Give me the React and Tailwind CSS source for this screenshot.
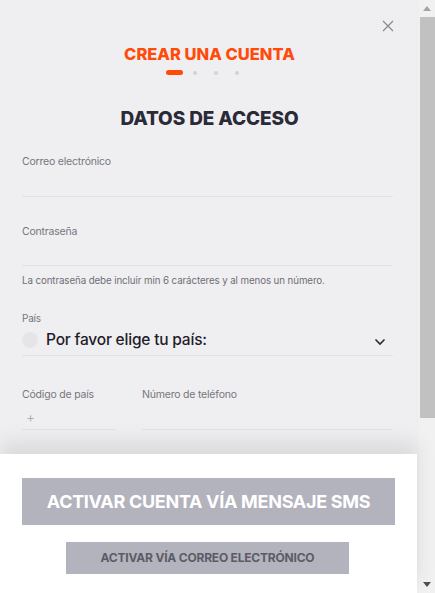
import React from "react";

const font = { fontFamily: "Inter, 'Liberation Sans', Arial, sans-serif" };

function Scrollbar() {
  return (
    <div className="w-[16px] h-[593px] bg-[#f1f1f1] flex flex-col items-center">
      <div className="h-[17px] w-full flex items-center justify-center">
        <svg width="8" height="5" viewBox="0 0 8 5">
          <path d="M0 5L4 0L8 5Z" fill="#a3a3a3" />
        </svg>
      </div>
      <div className="h-[401px] w-[15px] ml-[1px] bg-[#c1c1c1]" />
      <div className="flex-1" />
      <div className="h-[17px] w-full flex items-center justify-center">
        <svg width="8" height="5" viewBox="0 0 8 5">
          <path d="M0 0L8 0L4 5Z" fill="#505050" />
        </svg>
      </div>
    </div>
  );
}

export default function App() {
  return (
    <div className="h-[593px] w-[435px] flex bg-[#efeff1] overflow-hidden" style={font}>
      <div className="w-[419px] h-[593px] flex flex-col relative">
        <div className="relative px-[22px] pt-[45px] flex-1">
          <button className="absolute right-[25px] top-[20px] text-[#8a8a90]">
            <svg width="12" height="12" viewBox="0 0 12 12" fill="none" stroke="currentColor" strokeWidth="1.3">
              <path d="M1 1L11 11M11 1L1 11" />
            </svg>
          </button>
          <h1 className="text-center text-[16.5px] leading-[18px] font-extrabold tracking-[0px] text-[#ff4a0a]">
            CREAR UNA CUENTA
          </h1>
          <div className="flex items-center mt-[7px] ml-[144px]">
            <div className="h-[5px] w-[17px] rounded-full bg-[#ff4a0a]" />
            <div className="ml-[10px] h-[4px] w-[4px] rounded-full bg-[#d2d2d6]" />
            <div className="ml-[17px] h-[4px] w-[4px] rounded-full bg-[#d2d2d6]" />
            <div className="ml-[17px] h-[4px] w-[4px] rounded-full bg-[#d2d2d6]" />
          </div>
          <h2 className="mt-[33px] text-center text-[19px] leading-[22px] font-extrabold tracking-[-0.1px] text-[#2b2a38]">
            DATOS DE ACCESO
          </h2>

          <div className="mt-[25px] w-[371px]">
            <div className="text-[10.5px] leading-[14px] text-[#76767c] tracking-[-0.2px]">Correo electrónico</div>
            <div className="h-[28px] border-b border-[#e2e2e6]" />
          </div>

          <div className="mt-[28px] w-[371px]">
            <div className="text-[10.5px] leading-[14px] text-[#76767c] tracking-[-0.2px]">Contraseña</div>
            <div className="h-[27px] border-b border-[#e2e2e6]" />
            <div className="mt-[8px] text-[9.75px] leading-[14px] text-[#6e6e74] tracking-[-0.1px]">
              La contraseña debe incluir min 6 carácteres y al menos un número.
            </div>
          </div>

          <div className="mt-[24px] w-[371px]">
            <div className="text-[10px] leading-[13px] text-[#76767c] tracking-[-0.2px]">País</div>
            <div className="flex items-center h-[31px] border-b border-[#e2e2e6]">
              <div className="h-[16px] w-[16px] rounded-full bg-[#e5e5e8]" />
              <span className="ml-[8px] text-[15.5px] leading-[20px] font-medium text-[#1f1d2a] tracking-[-0.2px]">
                Por favor elige tu país:
              </span>
              <svg className="ml-auto mr-[7px] mt-[4px]" width="12" height="8" viewBox="0 0 12 8" fill="none" stroke="#2b2a38" strokeWidth="1.6">
                <path d="M1.5 1.5L6 6L10.5 1.5" />
              </svg>
            </div>
          </div>

          <div className="mt-[32px] flex w-[371px]">
            <div className="w-[93px]">
              <div className="text-[10.5px] leading-[14px] text-[#76767c] tracking-[-0.2px]">Código de país</div>
              <div className="h-[28px] border-b border-[#e2e2e6] flex items-center pl-[4px] pt-[2px] text-[14px] text-[#a6a6ac] font-light">+</div>
            </div>
            <div className="ml-[27px] flex-1">
              <div className="text-[10.5px] leading-[14px] text-[#76767c] tracking-[-0.2px]">Número de teléfono</div>
              <div className="h-[28px] border-b border-[#e2e2e6]" />
            </div>
          </div>
        </div>

        <div className="absolute bottom-0 left-0 right-[2px] bg-white h-[139px] shadow-[0_-12px_20px_rgba(0,0,0,0.09)] px-[22px] pt-[24px]">
          <div className="h-[47px] bg-[#b3b3bd] flex items-center justify-center text-white text-[18px] font-bold tracking-[-0.3px]">
            ACTIVAR CUENTA VÍA MENSAJE SMS
          </div>
          <div className="mt-[17px] ml-[44px] w-[283px] h-[32px] bg-[#b3b3bd] flex items-center justify-center text-[#5b5b66] text-[12px] font-bold tracking-[-0.2px]">
            ACTIVAR VÍA CORREO ELECTRÓNICO
          </div>
        </div>
      </div>
      <Scrollbar />
    </div>
  );
}
